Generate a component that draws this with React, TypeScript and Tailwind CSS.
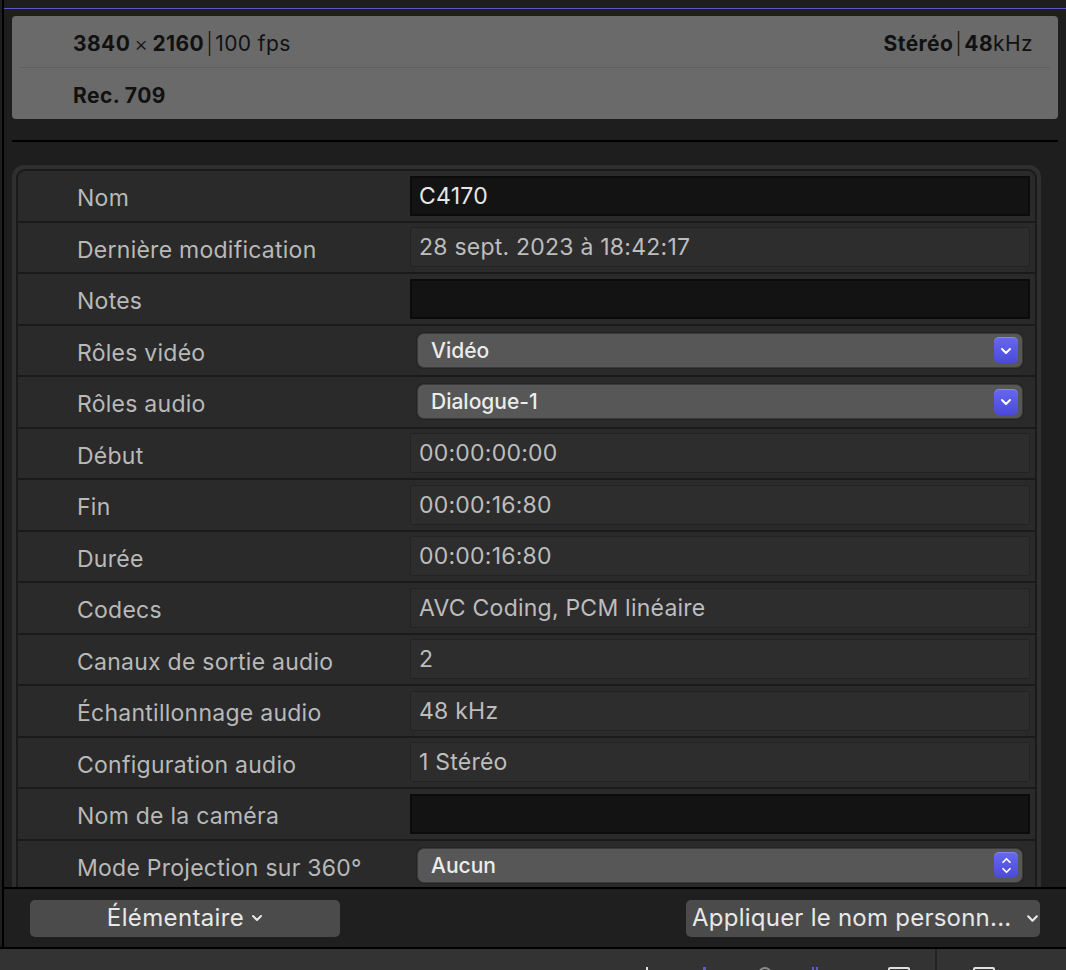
import React from 'react';

type Field =
  | { kind: 'input'; value: string }
  | { kind: 'static'; value: string }
  | { kind: 'popup'; value: string; stepper?: boolean };

const rows: { label: string; field: Field }[] = [
  { label: 'Nom', field: { kind: 'input', value: 'C4170' } },
  { label: 'Dernière modification', field: { kind: 'static', value: '28 sept. 2023 à 18:42:17' } },
  { label: 'Notes', field: { kind: 'input', value: '' } },
  { label: 'Rôles vidéo', field: { kind: 'popup', value: 'Vidéo' } },
  { label: 'Rôles audio', field: { kind: 'popup', value: 'Dialogue-1' } },
  { label: 'Début', field: { kind: 'static', value: '00:00:00:00' } },
  { label: 'Fin', field: { kind: 'static', value: '00:00:16:80' } },
  { label: 'Durée', field: { kind: 'static', value: '00:00:16:80' } },
  { label: 'Codecs', field: { kind: 'static', value: 'AVC Coding, PCM linéaire' } },
  { label: 'Canaux de sortie audio', field: { kind: 'static', value: '2' } },
  { label: 'Échantillonnage audio', field: { kind: 'static', value: '48 kHz' } },
  { label: 'Configuration audio', field: { kind: 'static', value: '1 Stéréo' } },
  { label: 'Nom de la caméra', field: { kind: 'input', value: '' } },
  { label: 'Mode Projection sur 360°', field: { kind: 'popup', value: 'Aucun', stepper: true } },
];

function Chevron({ className = '' }: { className?: string }) {
  return (
    <svg viewBox="0 0 12 8" className={className} fill="none" stroke="currentColor" strokeWidth={2} strokeLinecap="round" strokeLinejoin="round">
      <polyline points="2,2 6,6 10,2" />
    </svg>
  );
}

function BlueButton({ stepper }: { stepper?: boolean }) {
  return (
    <div className="w-[24px] h-[26px] rounded-[5px] bg-gradient-to-b from-[#6868ee] to-[#4a4ad8] flex flex-col items-center justify-center text-white shadow-[inset_0_1px_0_rgba(255,255,255,0.2)]">
      {stepper ? (
        <>
          <svg viewBox="0 0 12 8" className="w-[11px] h-[7px]" fill="none" stroke="currentColor" strokeWidth={2} strokeLinecap="round" strokeLinejoin="round">
            <polyline points="2,6 6,2 10,6" />
          </svg>
          <Chevron className="w-[11px] h-[7px] mt-[3px]" />
        </>
      ) : (
        <Chevron className="w-[12px] h-[8px] mt-[1px]" />
      )}
    </div>
  );
}

function FieldCell({ field }: { field: Field }) {
  if (field.kind === 'input') {
    return (
      <div className="h-[40px] flex items-center bg-[#131313] border-2 border-[#0b0b0b] px-[7px] text-[23px] tracking-[0.01em] text-[#e6e6e6]">
        {field.value}
      </div>
    );
  }
  if (field.kind === 'static') {
    return (
      <div className="h-[40px] flex items-center bg-[#2d2d2d] border border-[#232323] rounded-[2px] px-[8px] text-[23px] tracking-[0.01em] text-[#bdbdbd]">
        {field.value}
      </div>
    );
  }
  return (
    <div className="mx-[7px] h-[35px] flex items-center justify-between bg-[#575757] border border-[#3a3a3a] rounded-[7px] pl-[13px] pr-[4px] shadow-[0_0_0_1px_#242424]">
      <span className="text-[21px] font-medium text-[#ececec]">{field.value}</span>
      <BlueButton stepper={field.stepper} />
    </div>
  );
}

export default function App() {
  return (
    <div className="w-[1066px] h-[970px] overflow-hidden bg-[#1e1e1e] flex flex-col" style={{ fontFamily: 'Inter, "Noto Sans", sans-serif' }}>
      <div className="flex-1 min-h-0 ml-[2px] border-l-2 border-black flex flex-col">
        <div className="h-[8px] shrink-0" />
        <div className="h-[1px] bg-[#5b57c9] shrink-0" />
        {/* header summary */}
        <div className="mt-[7px] mx-[8px] h-[103px] shrink-0 bg-[#6a6a6a] rounded-[4px] flex flex-col text-[#111] text-[21px] tracking-[0.02em]">
          <div className="h-[51px] flex items-center justify-between pl-[61px] pr-[25px] pt-[4px]">
            <div className="flex items-center">
              <span className="font-bold">3840</span>
              <span className="mx-[4px] font-light">×</span>
              <span className="font-bold">2160</span>
              <span className="mx-[2px] font-light">|</span>
              <span>100 fps</span>
            </div>
            <div className="flex items-center">
              <span className="font-bold">Stéréo</span>
              <span className="mx-[2px] font-light">|</span>
              <span className="font-bold">48</span>
              <span>kHz</span>
            </div>
          </div>
          <div className="h-[1px] mx-[8px] bg-[#5f5f5f]" />
          <div className="flex-1 flex items-center pl-[61px] pt-[4px] font-bold">Rec. 709</div>
        </div>
        <div className="mt-[21px] mx-[8px] h-[2px] bg-black shrink-0" />
        {/* properties panel */}
        <div className="flex-1 min-h-0 overflow-hidden pt-[23px] pl-[8px] pr-[25px]">
          <div className="bg-[#2f2f2f] rounded-[12px] p-[4px] h-[800px]">
            <div className="h-full border-2 border-[#1a1a1a] rounded-[9px] bg-[#2a2a2a] overflow-hidden">
              {rows.map((r) => (
                <div key={r.label} className="h-[51.5px] border-b-2 border-[#1a1a1a] flex items-center pr-[5px]">
                  <div className="w-[392px] shrink-0 pl-[59px] pt-[5px] text-[23px] tracking-[0.011em] text-[#b9b9b9] whitespace-nowrap">{r.label}</div>
                  <div className="flex-1">
                    <FieldCell field={r.field} />
                  </div>
                </div>
              ))}
            </div>
          </div>
        </div>
        <div className="h-[2px] bg-black shrink-0" />
        {/* bottom action bar */}
        <div className="h-[58px] shrink-0 bg-[#1f1f1f] flex items-center justify-between pl-[26px] pr-[26px]">
          <button className="w-[310px] h-[37px] rounded-[5px] bg-[#4b4b4b] flex items-center justify-center text-[24px] tracking-[0.015em] text-[#e8e8e8]">
            Élémentaire
            <Chevron className="w-[12px] h-[8px] ml-[7px]" />
          </button>
          <button className="w-[354px] h-[37px] rounded-[5px] bg-[#4b4b4b] flex items-center justify-between pl-[6px] pr-[1px] text-[24px] tracking-[0.01em] text-[#e8e8e8] whitespace-nowrap overflow-hidden">
            Appliquer le nom personn...
            <Chevron className="w-[13px] h-[9px] shrink-0" />
          </button>
        </div>
      </div>
      <div className="h-[2px] bg-black shrink-0" />
      {/* clipped toolbar below */}
      <div className="h-[21px] shrink-0 bg-[#333333] flex overflow-hidden">
        <div className="w-[935px] flex items-start pt-[18px]">
          <div className="ml-[646px] w-[2px] h-[6px] bg-[#e0e0e0]" />
          <div className="ml-[55px] w-[3px] h-[6px] bg-[#5c58d8]" />
          <div className="ml-[52px] w-[14px] h-[14px] rounded-full border-2 border-[#8a8a8a]" />
          <div className="ml-[40px] w-[2px] h-[6px] bg-[#5c58d8]" />
          <div className="ml-[2px] w-[2px] h-[6px] bg-[#5c58d8]" />
          <div className="ml-[70px] w-[22px] h-[10px] border-2 border-[#e0e0e0] rounded-[2px]" />
        </div>
        <div className="w-[2px] bg-[#242424]" />
        <div className="flex-1 flex items-start pt-[18px]">
          <div className="ml-[36px] w-[22px] h-[10px] border-2 border-[#e0e0e0] rounded-[2px]" />
        </div>
      </div>
    </div>
  );
}
